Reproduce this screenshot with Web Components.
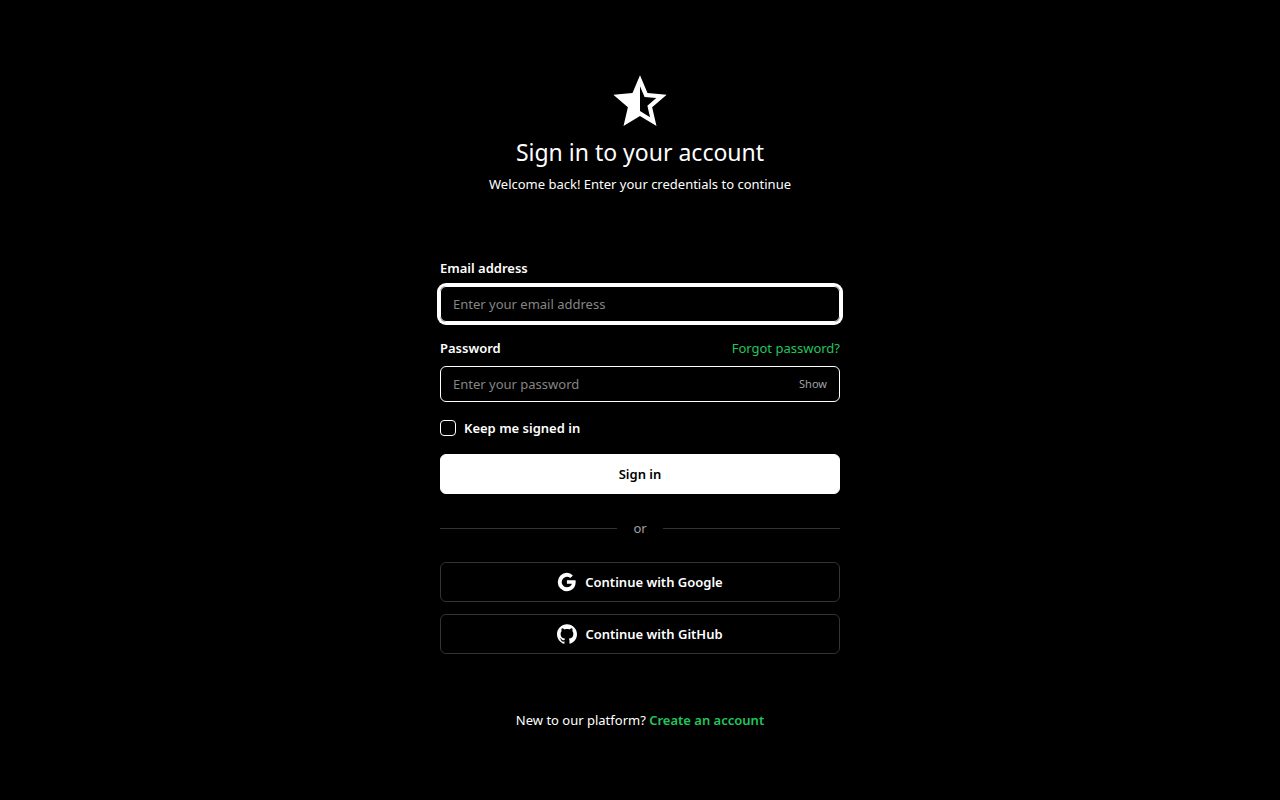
<!DOCTYPE html>
<html lang="en">
<head>
<meta charset="utf-8">
<meta name="viewport" content="width=device-width, initial-scale=1">
<title>Sign in</title>
<style>
    :root {
        --bg: #000;
        --text: #fff;
        --muted: #a1a1aa;
        --placeholder: #858585;
        --line: #333;
        --accent: #22c55e;
    }
    body {
        margin: 0;
        background: var(--bg);
        color: var(--text);
        font-family: "Noto Sans", "Open Sans", sans-serif;
        font-size: 13px;
        line-height: 20px;
    }
</style>
</head>
<body>
<sign-in-page>
    <star-logo slot="logo"></star-logo>
    <span slot="title">Sign in to your account</span>
    <span slot="subtitle">Welcome back! Enter your credentials to continue</span>

    <form-field label="Email address" type="email" placeholder="Enter your email address" active></form-field>
    <form-field label="Password" type="password" placeholder="Enter your password">
        <text-link slot="hint" href="#forgot">Forgot password?</text-link>
    </form-field>
    <check-field>Keep me signed in</check-field>
    <action-button variant="primary">Sign in</action-button>
    <line-divider>or</line-divider>
    <social-buttons></social-buttons>

    <span slot="footer">New to our platform? <text-link href="#register" strong>Create an account</text-link></span>
</sign-in-page>

<script>
class SignInPage extends HTMLElement {
    connectedCallback() {
        this.attachShadow({ mode: 'open' });
        this.shadowRoot.innerHTML = `
            <style>
                :host {
                    display: flex;
                    align-items: center;
                    justify-content: center;
                    min-height: 100vh;
                    box-sizing: border-box;
                    padding: 24px;
                }
                main {
                    width: 100%;
                    max-width: 400px;
                }
                header {
                    text-align: center;
                    margin-bottom: 64px;
                }
                h1 {
                    margin: 0 0 4px;
                    font-size: 23px;
                    line-height: 36px;
                    font-weight: 400;
                }
                p {
                    margin: 0;
                }
                form {
                    display: flex;
                    flex-direction: column;
                    gap: 16px;
                }
                footer {
                    margin-top: 56px;
                    text-align: center;
                }
            </style>
            <main>
                <header>
                    <slot name="logo"></slot>
                    <h1><slot name="title"></slot></h1>
                    <p><slot name="subtitle"></slot></p>
                </header>
                <form><slot></slot></form>
                <footer><slot name="footer"></slot></footer>
            </main>
        `;
    }
}

class StarLogo extends HTMLElement {
    connectedCallback() {
        this.attachShadow({ mode: 'open' });
        this.shadowRoot.innerHTML = `
            <style>
                :host {
                    display: flex;
                    justify-content: center;
                }
                svg {
                    display: block;
                    width: 64px;
                    height: 64px;
                    fill: currentColor;
                }
            </style>
            <svg viewBox="0 0 24 24" aria-hidden="true">
                <path d="M22 9.24l-7.19-.62L12 2 9.19 8.63 2 9.24l5.46 4.73L5.82 21 12 17.27 18.18 21l-1.63-7.03L22 9.24zM12 15.4V6.1l1.71 4.04 4.38.38-3.32 2.88 1 4.28L12 15.4z"/>
            </svg>
        `;
    }
}

class TextLink extends HTMLElement {
    connectedCallback() {
        this.attachShadow({ mode: 'open' });
        this.shadowRoot.innerHTML = `
            <style>
                :host {
                    display: inline;
                }
                a {
                    color: var(--accent);
                    text-decoration: none;
                }
                a:hover {
                    text-decoration: underline;
                }
                :host([strong]) a {
                    font-weight: 600;
                }
            </style>
            <a href="${this.getAttribute('href')}"><slot></slot></a>
        `;
    }
}

class FormField extends HTMLElement {
    connectedCallback() {
        const type = this.getAttribute('type');
        const isPassword = type === 'password';

        this.attachShadow({ mode: 'open' });
        this.shadowRoot.innerHTML = `
            <style>
                :host {
                    display: block;
                }
                .top {
                    display: flex;
                    justify-content: space-between;
                    margin-bottom: 8px;
                }
                label {
                    font-weight: 600;
                }
                .box {
                    display: flex;
                    align-items: center;
                    box-sizing: border-box;
                    height: 36px;
                    padding: 0 12px;
                    border: 1px solid var(--text);
                    border-radius: 6px;
                }
                :host([active]) .box,
                .box:focus-within {
                    box-shadow: 0 0 0 3px var(--text);
                }
                input {
                    flex: 1;
                    min-width: 0;
                    padding: 0;
                    border: 0;
                    outline: 0;
                    background: none;
                    color: inherit;
                    font: inherit;
                }
                input::placeholder {
                    color: var(--placeholder);
                    opacity: 1;
                }
                button {
                    padding: 0;
                    border: 0;
                    background: none;
                    color: var(--muted);
                    font: inherit;
                    font-size: 11px;
                    cursor: pointer;
                }
            </style>
            <div class="top">
                <label for="input">${this.getAttribute('label')}</label>
                <slot name="hint"></slot>
            </div>
            <div class="box">
                <input id="input" type="${type}" placeholder="${this.getAttribute('placeholder')}">
                ${isPassword ? '<button type="button">Show</button>' : ''}
            </div>
        `;

        if (isPassword) {
            const input = this.shadowRoot.querySelector('input');
            const btn = this.shadowRoot.querySelector('button');

            btn.addEventListener('click', () => {
                const hidden = input.type === 'password';
                input.type = hidden ? 'text' : 'password';
                btn.textContent = hidden ? 'Hide' : 'Show';
            });
        }
    }
}

class CheckField extends HTMLElement {
    connectedCallback() {
        this.attachShadow({ mode: 'open' });
        this.shadowRoot.innerHTML = `
            <style>
                :host {
                    display: flex;
                }
                label {
                    display: flex;
                    align-items: center;
                    gap: 8px;
                    font-weight: 600;
                }
                input {
                    appearance: none;
                    box-sizing: border-box;
                    width: 16px;
                    height: 16px;
                    margin: 0;
                    border: 1px solid var(--text);
                    border-radius: 4px;
                }
                input:checked {
                    background: var(--text);
                }
            </style>
            <label for="check"><input id="check" type="checkbox"><slot></slot></label>
        `;
    }
}

class ActionButton extends HTMLElement {
    connectedCallback() {
        this.attachShadow({ mode: 'open' });
        this.shadowRoot.innerHTML = `
            <style>
                :host {
                    display: block;
                }
                button {
                    display: flex;
                    align-items: center;
                    justify-content: center;
                    gap: 8px;
                    box-sizing: border-box;
                    width: 100%;
                    height: 40px;
                    padding: 0 16px;
                    border: 1px solid var(--line);
                    border-radius: 6px;
                    background: none;
                    color: inherit;
                    font: inherit;
                    font-weight: 600;
                    cursor: pointer;
                }
                :host([variant="primary"]) button {
                    border-color: var(--text);
                    background: var(--text);
                    color: var(--bg);
                }
            </style>
            <button type="button"><slot name="icon"></slot><slot></slot></button>
        `;
    }
}

class LineDivider extends HTMLElement {
    connectedCallback() {
        this.attachShadow({ mode: 'open' });
        this.shadowRoot.innerHTML = `
            <style>
                :host {
                    display: flex;
                    align-items: center;
                    gap: 16px;
                    padding: 8px 0;
                    color: var(--muted);
                }
                :host::before,
                :host::after {
                    content: "";
                    flex: 1;
                    height: 1px;
                    background: var(--line);
                }
            </style>
            <slot></slot>
        `;
    }
}

class SocialButtons extends HTMLElement {
    connectedCallback() {
        this.attachShadow({ mode: 'open' });
        this.shadowRoot.innerHTML = `
            <style>
                :host {
                    display: flex;
                    flex-direction: column;
                    gap: 12px;
                }
                svg {
                    display: block;
                    width: 20px;
                    height: 20px;
                    fill: currentColor;
                }
            </style>
            <action-button>
                <svg slot="icon" viewBox="0 0 24 24" aria-hidden="true">
                    <path d="M11.900 10v4.200h5.900c-.6 2.700-2.900 4.100-5.900 4.100a6.300 6.300 0 1 1 4.100-11.100l3.100-3.100A11 11 0 0 0 11.900 1a11 11 0 1 0 0 22c5.500 0 10.500-4 10.500-11 0-.7-.1-1.300-.2-2z"/>
                </svg>
                Continue with Google
            </action-button>
            <action-button>
                <svg slot="icon" viewBox="0 0 24 24" aria-hidden="true">
                    <path d="M12 .297c-6.630 0-12 5.373-12 12 0 5.303 3.438 9.800 8.205 11.385.6.113.82-.258.82-.577 0-.285-.01-1.040-.015-2.040-3.338.724-4.042-1.610-4.042-1.610C4.422 18.070 3.633 17.700 3.633 17.700c-1.087-.744.084-.729.084-.729 1.205.084 1.838 1.236 1.838 1.236 1.070 1.835 2.809 1.305 3.495.998.108-.776.417-1.305.76-1.605-2.665-.3-5.466-1.332-5.466-5.930 0-1.310.465-2.380 1.235-3.220-.135-.303-.54-1.523.105-3.176 0 0 1.005-.322 3.300 1.230.96-.267 1.980-.399 3-.405 1.020.006 2.040.138 3 .405 2.280-1.552 3.285-1.230 3.285-1.230.645 1.653.24 2.873.12 3.176.765.840 1.230 1.910 1.230 3.220 0 4.610-2.805 5.625-5.475 5.920.42.36.81 1.096.81 2.220 0 1.606-.015 2.896-.015 3.286 0 .315.21.69.825.570C20.565 22.092 24 17.592 24 12.297c0-6.627-5.373-12-12-12"/>
                </svg>
                Continue with GitHub
            </action-button>
        `;
    }
}

customElements.define('sign-in-page', SignInPage);
customElements.define('star-logo', StarLogo);
customElements.define('text-link', TextLink);
customElements.define('form-field', FormField);
customElements.define('check-field', CheckField);
customElements.define('action-button', ActionButton);
customElements.define('line-divider', LineDivider);
customElements.define('social-buttons', SocialButtons);
</script>
</body>
</html>
